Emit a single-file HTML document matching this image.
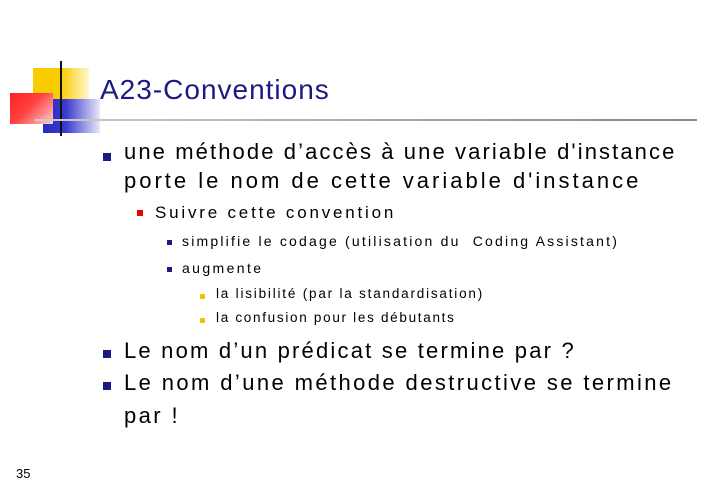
<!DOCTYPE html>
<html><head><meta charset="utf-8"><style>
body{margin:0;width:720px;height:498px;background:#fff;position:relative;overflow:hidden;font-family:"Liberation Sans",sans-serif;color:#000}
.a{position:absolute;white-space:nowrap}
.b{position:absolute}
</style></head><body>
<div class="b" style="left:33px;top:68px;width:56px;height:42px;background:linear-gradient(90deg,#f8cc00 0%,#f8cc00 50%,#fff8d0 100%)"></div>
<div class="b" style="left:43px;top:99px;width:57px;height:34px;background:linear-gradient(90deg,#2a2ac0 0%,#3a3ad0 40%,#e8e8f8 100%)"></div>
<div class="b" style="left:10px;top:93px;width:43px;height:31px;background:linear-gradient(135deg,#ff2020 0%,#ff4040 45%,#ffd0d0 100%)"></div>
<div class="b" style="left:60px;top:61px;width:2px;height:75px;background:#111"></div>
<div class="b" style="left:35px;top:119px;width:662px;height:2px;background:linear-gradient(90deg,#ccc,#888)"></div>
<div class="a" style="left:100px;top:74px;font-size:28px;color:#1a1a80;letter-spacing:1px">A23-Conventions</div>
<div class="b" style="left:103px;top:153px;width:8px;height:8px;background:#1a1a80"></div>
<div class="a" style="left:124px;top:137px;font-size:22px;line-height:29px;letter-spacing:2.1px">une méthode d’accès à une variable d'instance</div>
<div class="a" style="left:124px;top:166px;font-size:22px;line-height:29px;letter-spacing:3px">porte le nom de cette variable d'instance</div>
<div class="b" style="left:137px;top:210px;width:6px;height:6px;background:#e00"></div>
<div class="a" style="left:155px;top:203px;font-size:17px;letter-spacing:2.8px">Suivre cette convention</div>
<div class="b" style="left:167px;top:240px;width:5px;height:5px;background:#1a1a80"></div>
<div class="a" style="left:182px;top:233px;font-size:14px;letter-spacing:2.2px">simplifie le codage (utilisation du&nbsp; Coding Assistant)</div>
<div class="b" style="left:167px;top:267px;width:5px;height:5px;background:#1a1a80"></div>
<div class="a" style="left:182px;top:260px;font-size:14px;letter-spacing:2.4px">augmente</div>
<div class="b" style="left:200px;top:294px;width:5px;height:5px;background:#f0c000"></div>
<div class="a" style="left:216px;top:286px;font-size:13.5px;letter-spacing:1.8px">la lisibilité (par la standardisation)</div>
<div class="b" style="left:200px;top:318px;width:5px;height:5px;background:#f0c000"></div>
<div class="a" style="left:216px;top:310px;font-size:13.5px;letter-spacing:1.7px">la confusion pour les débutants</div>
<div class="b" style="left:103px;top:350px;width:8px;height:8px;background:#1a1a80"></div>
<div class="a" style="left:124px;top:338px;font-size:22px;letter-spacing:2.2px">Le nom d’un prédicat se termine par ?</div>
<div class="b" style="left:103px;top:382px;width:8px;height:8px;background:#1a1a80"></div>
<div class="a" style="left:124px;top:370px;font-size:22px;letter-spacing:2.4px">Le nom d’une méthode destructive se termine</div>
<div class="a" style="left:124px;top:403px;font-size:22px;letter-spacing:2.4px">par !</div>
<div class="a" style="left:16px;top:466px;font-size:13px">35</div>
</body></html>
